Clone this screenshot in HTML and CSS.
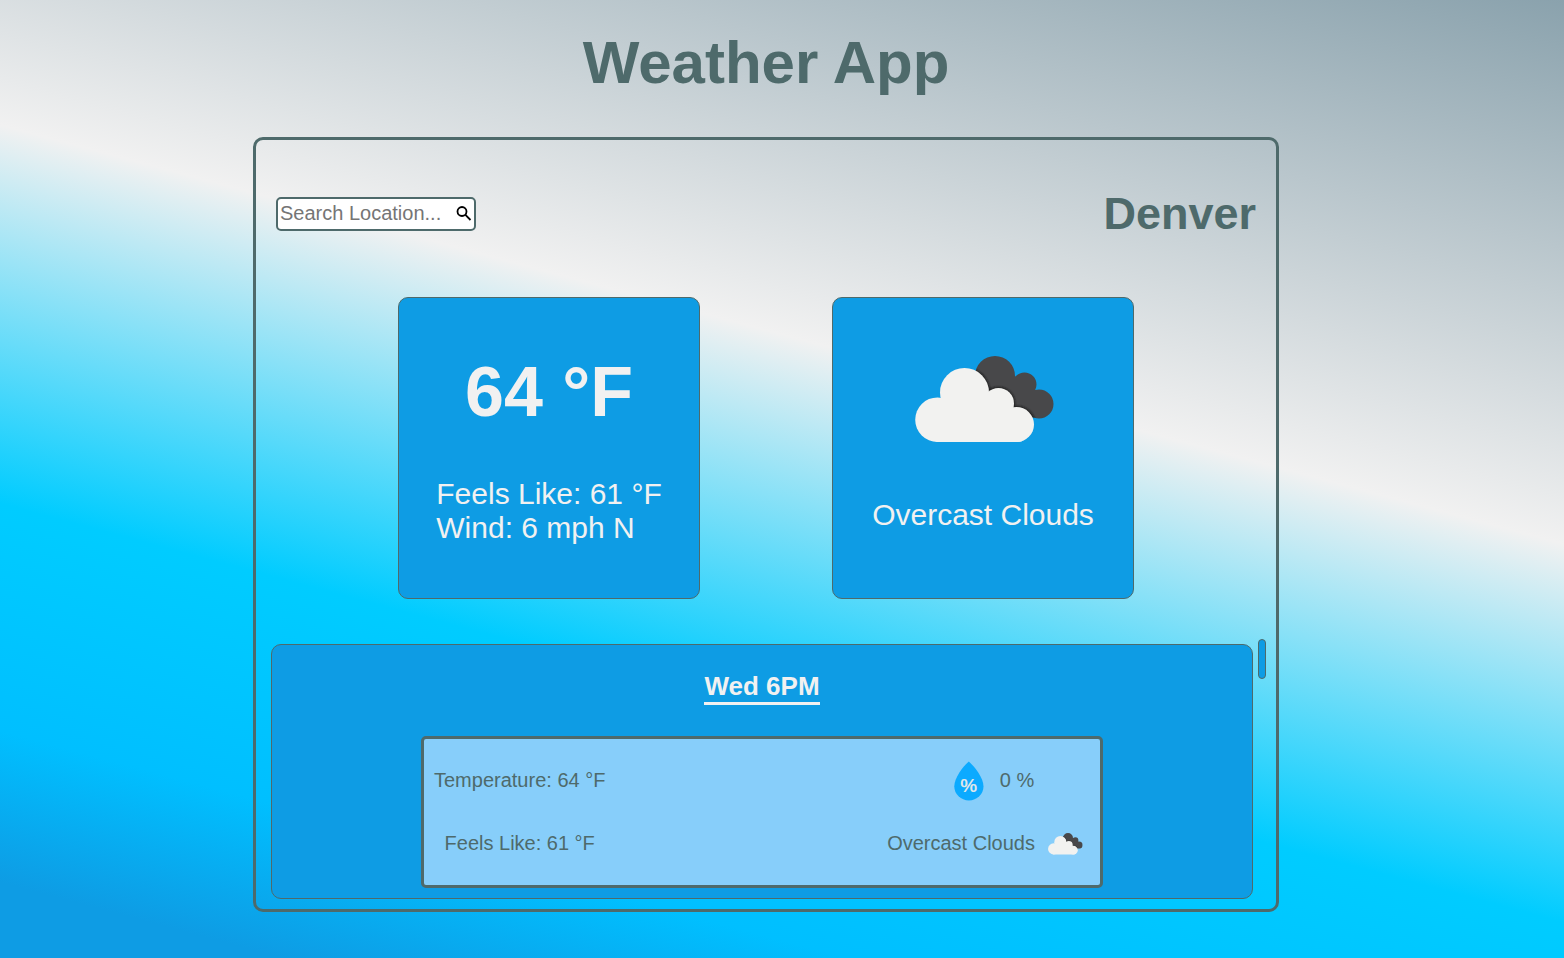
FILE: index.html
```html
<!DOCTYPE html>
<html lang="en">
<head>
<meta charset="utf-8">
<title>Weather App</title>
<link rel="stylesheet" href="styles.css">
</head>
<body>
<svg class="defs" width="0" height="0" aria-hidden="true">
  <defs>
    <filter id="soft" x="-10%" y="-10%" width="120%" height="120%"><feGaussianBlur stdDeviation="1.3"/></filter>
    <clipPath id="dark"><circle cx="95" cy="36" r="20"/><circle cx="124.500" cy="44.500" r="12"/><circle cx="139" cy="64" r="14.500"/><path d="M80 40L115 36L138 52L139 78.500L100 72Z"/></clipPath>
    <symbol id="clouds" viewBox="0 0 170 120">
      <g clip-path="url(#dark)">
        <rect width="170" height="120" fill="#48484a"/>
        <g fill="#1c1c1c" filter="url(#soft)"><circle cx="64.500" cy="52.500" r="25.500"/><circle cx="98.500" cy="63.500" r="16.500"/><circle cx="117" cy="84.500" r="18.500"/></g>
      </g>
      <g fill="#f2f2f0"><circle cx="37.500" cy="79.700" r="22.300"/><circle cx="64.500" cy="52.500" r="24.500"/><circle cx="98.500" cy="63.500" r="15.500"/><circle cx="116.500" cy="84.500" r="17.500"/><path d="M40 60L110 60L122 101.200Q120 102 117 102L37 102L33 100Z"/></g>
    </symbol>
  </defs>
</svg>
<h1 class="title">Weather App</h1>
<main class="panel">
  <header class="top">
    <form class="search">
      <input class="search-input" type="text" placeholder="Search Location...">
      <svg class="search-icon" viewBox="0 0 16 16"><circle cx="6" cy="5.500" r="4.500"/><path d="M9.200 8.700L14.500 14"/></svg>
    </form>
    <h2 class="city">Denver</h2>
  </header>
  <section class="current">
    <div class="card">
      <div class="temp">64 °F</div>
      <div class="details">Feels Like: 61 °F<br>Wind: 6 mph N</div>
    </div>
    <div class="card card-sky">
      <svg class="sky-icon"><use href="#clouds"/></svg>
      <div class="sky-text">Overcast Clouds</div>
    </div>
  </section>
  <section class="forecast">
    <article class="hour">
      <h3 class="hour-title">Wed 6PM</h3>
      <div class="hour-box">
        <div class="col">
          <div class="row">Temperature: 64 °F</div>
          <div class="row">Feels Like: 61 °F</div>
        </div>
        <div class="col col-right">
          <div class="row rain">
            <svg class="drop" viewBox="0 0 30 40"><path d="M14.800 .5C9 5.500 .3 17 .3 25.300A14.600 14.200 0 0 0 29.500 25.300C29.500 17 20.500 5.500 14.800 .5Z"/><text x="14.800" y="30.500">%</text></svg>
            <span>0 %</span>
          </div>
          <div class="row sky-row"><span>Overcast Clouds</span><svg class="mini"><use href="#clouds"/></svg></div>
        </div>
      </div>
    </article>
    <div class="thumb"></div>
  </section>
</main>
</body>
</html>
```

FILE: styles.css
```css
* { box-sizing: border-box; }
html { height: 100%; }
body {
  margin: 0;
  height: 100%;
  overflow: hidden;
  font-family: "Liberation Sans", Arial, sans-serif;
  color: #4e6a6b;
  background: linear-gradient(15deg, #0e9ce4 0%, #0e9ce4 5.500%, #00bfff 16.500%, #00ccff 33%, #f1f1f1 60.500%, #8aa2ad 100%);
}
.defs { position: absolute; }
.title {
  width: 1532px;
  margin: 0;
  padding-top: 28px;
  height: 137px;
  font-size: 60px;
  line-height: 69px;
  text-align: center;
}
.panel {
  width: 1026px;
  height: 775px;
  margin-left: 253px;
  border: 3px solid #4e6a6b;
  border-radius: 10px;
}
.top {
  display: flex;
  justify-content: space-between;
  align-items: center;
  height: 147px;
  padding: 0 20px;
}
.search {
  display: flex;
  align-items: center;
  width: 200px;
  height: 34px;
  border: 2px solid #4e6a6b;
  border-radius: 5px;
  background: #fff;
}
.search-input {
  width: 178px;
  height: 30px;
  padding: 0 0 0 2px;
  border: 0;
  outline: 0;
  background: none;
  font: 20px "Liberation Sans", Arial, sans-serif;
}
.search-input::placeholder { color: #757575; }
.search-icon {
  width: 16px;
  height: 16px;
  fill: none;
  stroke: #000;
  stroke-width: 1.800;
}
.city { margin: 0; font-size: 45px; line-height: 52px; }
.current {
  display: flex;
  justify-content: center;
  gap: 132px;
  height: 357px;
  padding-top: 10px;
}
.card {
  display: flex;
  flex-direction: column;
  align-items: center;
  width: 302px;
  height: 302px;
  border: 1px solid #4e6a6b;
  border-radius: 10px;
  background: #0e9ce4;
  color: #f1f1f1;
  font-size: 30px;
  line-height: 34px;
}
.temp {
  margin-top: 54px;
  font-size: 70px;
  line-height: 80px;
  font-weight: bold;
}
.details { margin-top: 45px; }
.sky-icon { width: 170px; height: 120px; margin: 42px 0 0 4px; }
.sky-text { margin-top: 38px; }
.forecast {
  display: flex;
  align-items: flex-start;
  gap: 5px;
  padding-left: 15px;
}
.hour {
  display: flex;
  flex-direction: column;
  align-items: center;
  width: 982px;
  height: 255px;
  border: 1px solid #4e6a6b;
  border-radius: 10px;
  background: #0e9ce4;
}
.hour-title {
  margin: 26px 0 31px;
  height: 34px;
  border-bottom: 3px solid #f1f1f1;
  color: #f1f1f1;
  font-size: 26px;
  line-height: 30px;
}
.hour-box {
  display: flex;
  justify-content: space-between;
  width: 682px;
  height: 152px;
  padding: 10px 7px 0 10px;
  border: 3px solid #4e6a6b;
  border-radius: 5px;
  background: #87cefa;
  font-size: 20px;
}
.col { text-align: center; }
.row { height: 63px; line-height: 63px; }
.rain { display: flex; align-items: center; justify-content: center; gap: 16px; padding-left: 8px; }
.drop { width: 30px; height: 40px; fill: #0caaff; }
.drop text { fill: #dde6ea; font-size: 19px; font-weight: bold; text-anchor: middle; }
.sky-row { display: flex; align-items: center; }
.mini { width: 43px; height: 30px; margin: 0 6px 0 9px; }
.thumb {
  width: 8px;
  height: 40px;
  margin-top: -5px;
  border: 1px solid #4e6a6b;
  border-radius: 5px;
  background: #0e9ce4;
}
```
